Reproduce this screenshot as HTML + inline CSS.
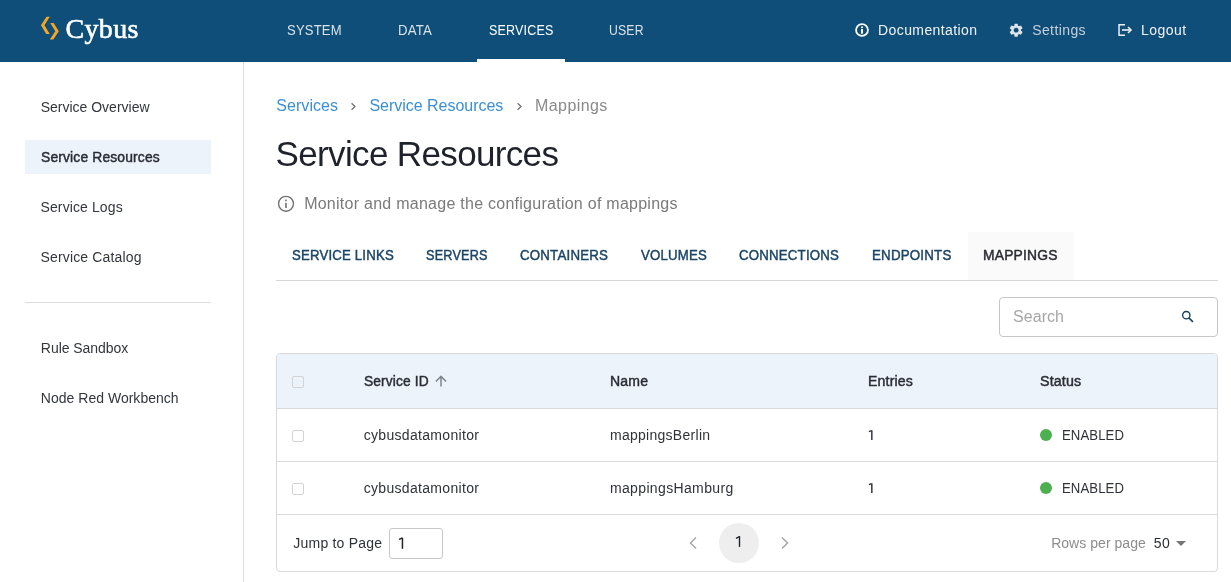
<!DOCTYPE html>
<html><head><meta charset="utf-8">
<style>
*{box-sizing:border-box;margin:0;padding:0}
html,body{width:1231px;height:582px;overflow:hidden;background:#fff}
body{position:relative;font-family:"Liberation Sans",sans-serif;}
.t{position:absolute;white-space:nowrap;line-height:1;}
#root{position:absolute;left:0;top:0;width:1231px;height:582px;will-change:transform;background:#fff}
.m{-webkit-text-stroke:0.45px currentColor}
.sl{-webkit-text-stroke:0.6px currentColor}
.ab{position:absolute}
.cb{position:absolute;width:12px;height:12px;border:1px solid #d3d3d3;border-radius:2px;background:transparent}
.dot{position:absolute;width:12px;height:12px;border-radius:50%;background:#4caf50}
</style></head><body><div id="root">
<div class="ab" style="left:0;top:0;width:1231px;height:62px;background:#0f4e78"></div>
<svg class="ab" style="left:36px;top:12px" width="28" height="32" viewBox="0 0 28 32">
  <polygon points="10.5,4.7 13.8,4.7 8.4,13.2 13.8,22 10.2,22 5,13.2" fill="#f6a623"/>
  <polygon points="14.3,11 17.6,11 22.8,19.25 17.3,27.5 13.8,27.5 19.3,19.25" fill="#f6a623"/>
</svg>
<div class="t sl" id="cybus" style="left:65.43px;top:15px;font-size:28px;color:#ffffff;letter-spacing:0.372px;font-family:'Liberation Serif',serif;">Cybus</div>
<div class="t" id="nav1" style="left:286.58px;top:23px;font-size:14px;color:#d9e1e8;letter-spacing:0.200px;transform:scaleX(0.9316);transform-origin:0 0;">SYSTEM</div>
<div class="t" id="nav2" style="left:397.81px;top:23px;font-size:14px;color:#d9e1e8;letter-spacing:0.200px;transform:scaleX(0.9436);transform-origin:0 0;">DATA</div>
<div class="t" id="nav3" style="left:488.68px;top:23px;font-size:14px;color:#ffffff;letter-spacing:0.200px;transform:scaleX(0.8949);transform-origin:0 0;">SERVICES</div>
<div class="t" id="nav4" style="left:609.04px;top:23px;font-size:14px;color:#d9e1e8;letter-spacing:0.200px;transform:scaleX(0.8742);transform-origin:0 0;">USER</div>
<div class="ab" style="left:477px;top:59px;width:88px;height:3px;background:#fff"></div>
<svg class="ab" style="left:855px;top:23px" width="14" height="14" viewBox="0 0 14 14">
  <circle cx="7" cy="7" r="5.95" fill="none" stroke="#fff" stroke-width="1.8"/>
  <rect x="6" y="5.9" width="2" height="4.8" fill="#fff"/><rect x="6" y="3.5" width="2" height="1.5" fill="#fff"/>
</svg>
<div class="t" id="doc" style="left:878.08px;top:23px;font-size:14px;color:#f0f3f6;letter-spacing:0.401px;">Documentation</div>
<svg class="ab" style="left:1007.85px;top:21.85px" width="16.3" height="16.3" viewBox="0 0 24 24">
  <path fill="#dde3e8" d="M19.14 12.94c.04-.3.06-.61.06-.94 0-.32-.02-.64-.07-.94l2.03-1.58c.18-.14.23-.41.12-.61l-1.92-3.32c-.12-.22-.37-.29-.59-.22l-2.390.96c-.5-.38-1.030-.7-1.62-.94l-.36-2.54c-.04-.24-.24-.41-.48-.41h-3.84c-.24 0-.43.17-.47.41l-.36 2.54c-.59.24-1.13.57-1.62.94l-2.39-.96c-.22-.08-.47 0-.59.22L2.74 8.87c-.12.21-.08.47.12.61l2.03 1.58c-.05.3-.09.63-.09.94s.02.64.07.94l-2.03 1.58c-.18.14-.23.41-.12.61l1.92 3.32c.12.22.37.29.59.22l2.39-.96c.5.38 1.03.7 1.62.94l.36 2.54c.05.24.24.41.48.41h3.84c.24 0 .44-.17.47-.41l.36-2.54c.59-.24 1.13-.56 1.62-.94l2.39.96c.22.08.47 0 .59-.22l1.92-3.32c.12-.22.07-.47-.12-.61l-2.01-1.58zM12 15.6c-1.98 0-3.6-1.62-3.6-3.6s1.62-3.6 3.6-3.6 3.6 1.62 3.6 3.6-1.62 3.6-3.6 3.6z"/>
</svg>
<div class="t" id="settings" style="left:1032.17px;top:23px;font-size:14px;color:#c6d0d9;letter-spacing:0.408px;">Settings</div>
<svg class="ab" style="left:1112px;top:18px" width="24" height="24" viewBox="0 0 24 24">
  <path d="M13 6.75 H7.05 V17.15 H13" fill="none" stroke="#eef1f4" stroke-width="1.5"/>
  <path d="M10 12 H18.5" fill="none" stroke="#eef1f4" stroke-width="1.6"/>
  <path d="M16 9 L19 12 L16 15" fill="none" stroke="#eef1f4" stroke-width="1.6"/>
</svg>
<div class="t" id="logout" style="left:1140.89px;top:23px;font-size:14px;color:#f0f3f6;letter-spacing:0.505px;">Logout</div>
<div class="ab" style="left:243px;top:62px;width:1px;height:520px;background:#dedede"></div>
<div class="ab" style="left:25px;top:140px;width:186px;height:34px;background:#ecf3fb"></div>
<div class="t" id="s1" style="left:40.73px;top:100px;font-size:14px;color:#33363d;letter-spacing:-0.007px;">Service Overview</div>
<div class="t m" id="s2" style="left:41.30px;top:150px;font-size:14px;color:#2a2d34;letter-spacing:0.150px;transform:scaleX(0.9900);transform-origin:0 0;">Service Resources</div>
<div class="t" id="s3" style="left:40.53px;top:200px;font-size:14px;color:#33363d;letter-spacing:0.108px;">Service Logs</div>
<div class="t" id="s4" style="left:40.53px;top:250px;font-size:14px;color:#33363d;letter-spacing:0.149px;">Service Catalog</div>
<div class="ab" style="left:25px;top:302px;width:186px;height:1px;background:#dedede"></div>
<div class="t" id="s5" style="left:40.87px;top:341px;font-size:14px;color:#33363d;letter-spacing:-0.051px;">Rule Sandbox</div>
<div class="t" id="s6" style="left:40.87px;top:391px;font-size:14px;color:#33363d;letter-spacing:0.014px;">Node Red Workbench</div>
<div class="t" id="bc1" style="left:276.26px;top:98px;font-size:16px;color:#3b8ed4;letter-spacing:0.057px;">Services</div>
<svg class="ab" style="left:348px;top:100px" width="10" height="13" viewBox="0 0 10 13">
  <path d="M3.6 3.3 L7 6.5 L3.6 9.7" fill="none" stroke="#707070" stroke-width="1.3"/></svg>
<div class="t" id="bc2" style="left:369.45px;top:98px;font-size:16px;color:#3b8ed4;letter-spacing:-0.027px;">Service Resources</div>
<svg class="ab" style="left:514px;top:100px" width="10" height="13" viewBox="0 0 10 13">
  <path d="M3.6 3.3 L7 6.5 L3.6 9.7" fill="none" stroke="#707070" stroke-width="1.3"/></svg>
<div class="t" id="bc3" style="left:535.06px;top:98px;font-size:16px;color:#8a8a8a;letter-spacing:0.407px;">Mappings</div>
<div class="t" id="title" style="left:275.62px;top:136px;font-size:35px;color:#1f222b;letter-spacing:-0.650px;">Service Resources</div>
<svg class="ab" style="left:277px;top:195px" width="18" height="18" viewBox="0 0 18 18">
  <circle cx="9" cy="8.8" r="7.45" fill="none" stroke="#707070" stroke-width="1.35"/>
  <rect x="8.2" y="7.9" width="1.6" height="5.1" fill="#707070"/><rect x="8.2" y="4.6" width="1.6" height="1.7" fill="#707070"/>
</svg>
<div class="t" id="sub" style="left:304.13px;top:196px;font-size:16px;color:#7a7a7a;letter-spacing:0.261px;">Monitor and manage the configuration of mappings</div>
<div class="ab" style="left:968px;top:232px;width:106px;height:48px;background:#fafafa"></div>
<div class="ab" style="left:276px;top:280px;width:942px;height:1px;background:#d6d6d6"></div>
<div class="t m" id="tab1" style="left:291.73px;top:248px;font-size:14px;color:#1a4567;letter-spacing:0.200px;transform:scaleX(0.9419);transform-origin:0 0;">SERVICE LINKS</div>
<div class="t m" id="tab2" style="left:426.44px;top:248px;font-size:14px;color:#1a4567;letter-spacing:0.200px;transform:scaleX(0.9065);transform-origin:0 0;">SERVERS</div>
<div class="t m" id="tab3" style="left:519.94px;top:248px;font-size:14px;color:#1a4567;letter-spacing:0.200px;transform:scaleX(0.9496);transform-origin:0 0;">CONTAINERS</div>
<div class="t m" id="tab4" style="left:641.41px;top:248px;font-size:14px;color:#1a4567;letter-spacing:0.200px;transform:scaleX(0.9436);transform-origin:0 0;">VOLUMES</div>
<div class="t m" id="tab5" style="left:739.36px;top:248px;font-size:14px;color:#1a4567;letter-spacing:0.200px;transform:scaleX(0.9475);transform-origin:0 0;">CONNECTIONS</div>
<div class="t m" id="tab6" style="left:871.83px;top:248px;font-size:14px;color:#1a4567;letter-spacing:0.200px;transform:scaleX(0.9521);transform-origin:0 0;">ENDPOINTS</div>
<div class="t m" id="tab7" style="left:983.04px;top:248px;font-size:14px;color:#2b2c33;letter-spacing:0.200px;transform:scaleX(0.9894);transform-origin:0 0;">MAPPINGS</div>
<div class="ab" style="left:999px;top:297px;width:219px;height:40px;border:1px solid #c6c6c6;border-radius:4px"></div>
<div class="t" id="search" style="left:1013.06px;top:309px;font-size:16px;color:#a6a6a6;letter-spacing:0.042px;">Search</div>
<svg class="ab" style="left:1181px;top:310px" width="13" height="13" viewBox="0 0 13 13">
  <circle cx="5.3" cy="5.15" r="3.65" fill="none" stroke="#113d60" stroke-width="1.35"/>
  <path d="M7.9 7.9 L11.9 11.9" stroke="#113d60" stroke-width="1.5"/></svg>
<div class="ab" style="left:276px;top:353px;width:942px;height:219px;border:1px solid #d9d9d9;border-radius:4px;overflow:hidden">
  <div class="ab" style="left:0;top:0;width:100%;height:55px;background:#edf3fb;border-bottom:1px solid #d9d9d9"></div>
  <div class="ab" style="left:0;top:107px;width:100%;height:1px;background:#d9d9d9"></div>
  <div class="ab" style="left:0;top:160px;width:100%;height:1px;background:#d9d9d9"></div>
</div>
<div class="cb" style="left:292px;top:376px"></div>
<div class="t m" id="th1" style="left:364.21px;top:374px;font-size:14px;color:#2a2d34;letter-spacing:0.150px;transform:scaleX(0.9811);transform-origin:0 0;">Service ID</div>
<svg class="ab" style="left:434px;top:375px" width="14" height="12" viewBox="0 0 14 12">
  <path d="M7 11.5 V1.8 M1.9 6.5 L7 1.4 L12.1 6.5" fill="none" stroke="#80848c" stroke-width="1.5"/></svg>
<div class="t m" id="th2" style="left:610.13px;top:374px;font-size:14px;color:#2a2d34;letter-spacing:0.150px;transform:scaleX(1.0041);transform-origin:0 0;">Name</div>
<div class="t m" id="th3" style="left:867.77px;top:374px;font-size:14px;color:#2a2d34;letter-spacing:0.150px;transform:scaleX(1.0102);transform-origin:0 0;">Entries</div>
<div class="t m" id="th4" style="left:1039.79px;top:374px;font-size:14px;color:#2a2d34;letter-spacing:0.150px;transform:scaleX(1.0179);transform-origin:0 0;">Status</div>
<div class="cb" style="left:292px;top:430px"></div>
<div class="t" id="r0c1" style="left:363.65px;top:428px;font-size:14px;color:#2f3238;letter-spacing:0.321px;">cybusdatamonitor</div>
<div class="t" id="r0c2" style="left:609.95px;top:428px;font-size:14px;color:#2f3238;letter-spacing:0.279px;">mappingsBerlin</div>
<svg class="ab" style="left:866px;top:428px" width="10" height="14" viewBox="0 0 10 14"><rect x="5.1" y="2.3" width="1.45" height="9.7" fill="#2f3238"/><path d="M2.9 3.6 L5.6 2.6" stroke="#2f3238" stroke-width="1.3"/></svg>
<div class="dot" style="left:1040px;top:429px"></div>
<div class="t" id="r0c4" style="left:1061.84px;top:428px;font-size:14px;color:#2f3238;letter-spacing:0.100px;transform:scaleX(0.9394);transform-origin:0 0;">ENABLED</div>
<div class="cb" style="left:292px;top:483px"></div>
<div class="t" id="r1c1" style="left:363.65px;top:481px;font-size:14px;color:#2f3238;letter-spacing:0.321px;">cybusdatamonitor</div>
<div class="t" id="r1c2" style="left:609.95px;top:481px;font-size:14px;color:#2f3238;letter-spacing:0.358px;">mappingsHamburg</div>
<svg class="ab" style="left:866px;top:481px" width="10" height="14" viewBox="0 0 10 14"><rect x="5.1" y="2.3" width="1.45" height="9.7" fill="#2f3238"/><path d="M2.9 3.6 L5.6 2.6" stroke="#2f3238" stroke-width="1.3"/></svg>
<div class="dot" style="left:1040px;top:482px"></div>
<div class="t" id="r1c4" style="left:1061.84px;top:481px;font-size:14px;color:#2f3238;letter-spacing:0.100px;transform:scaleX(0.9394);transform-origin:0 0;">ENABLED</div>
<div class="t" id="jump" style="left:293.35px;top:536px;font-size:14px;color:#2f3238;letter-spacing:0.204px;">Jump to Page</div>
<div class="ab" style="left:389px;top:528px;width:54px;height:31px;border:1px solid #c8c8c8;border-radius:3px"></div>
<svg class="ab" style="left:394px;top:532px" width="12" height="18" viewBox="0 0 12 18"><rect x="7.7" y="5.8" width="1.5" height="11" fill="#22242b"/><path d="M5 7.4 L8.4 6" stroke="#22242b" stroke-width="1.4"/></svg>
<svg class="ab" style="left:686px;top:535px" width="14" height="16" viewBox="0 0 14 16">
  <path d="M10 2.5 L4.5 8 L10 13.5" fill="none" stroke="#a6a6a6" stroke-width="1.5"/></svg>
<div class="ab" style="left:719px;top:523px;width:40px;height:40px;border-radius:50%;background:#eeeeee"></div>
<svg class="ab" style="left:730px;top:532px" width="12" height="18" viewBox="0 0 12 18"><rect x="8.8" y="4.1" width="1.4" height="10.8" fill="#22242b"/><path d="M6 6.4 L9.5 4.6" stroke="#22242b" stroke-width="1.4"/></svg>
<svg class="ab" style="left:778px;top:535px" width="14" height="16" viewBox="0 0 14 16">
  <path d="M4 2.5 L9.5 8 L4 13.5" fill="none" stroke="#a6a6a6" stroke-width="1.5"/></svg>
<div class="t" id="rpp" style="left:1051.13px;top:536px;font-size:14px;color:#8c8c8c;letter-spacing:0.044px;">Rows per page</div>
<div class="t" id="fifty" style="left:1153.66px;top:536px;font-size:14px;color:#2a2d34;letter-spacing:0.475px;">50</div>
<svg class="ab" style="left:1175px;top:540px" width="12" height="7" viewBox="0 0 12 7">
  <path d="M1 1 H11 L6 6 Z" fill="#757575"/></svg>
</div></body></html>
